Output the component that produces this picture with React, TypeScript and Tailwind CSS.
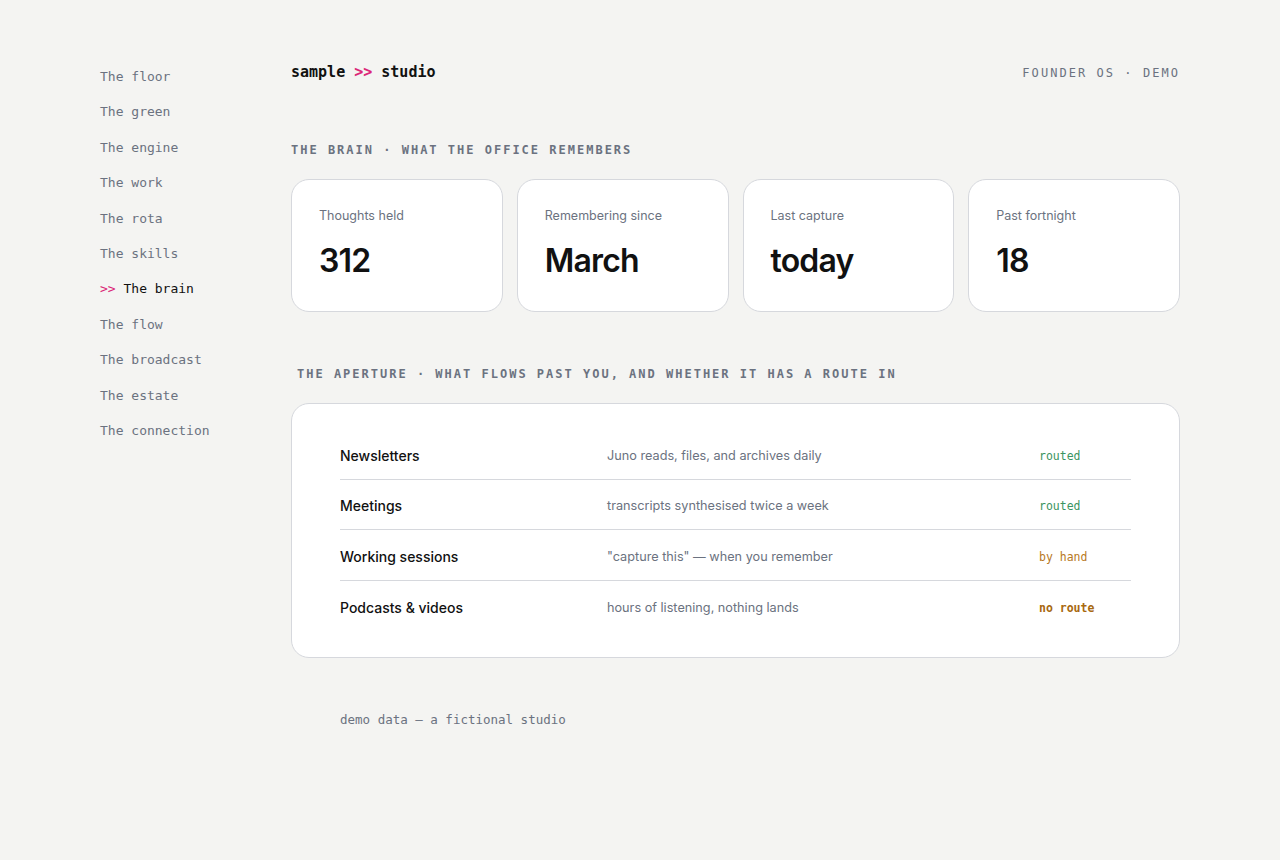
import React from "react";

const mono = "font-['DejaVu_Sans_Mono','Liberation_Mono',monospace]";
const sans = "font-['Inter','Noto_Sans',sans-serif]";

const nav = [
  "The floor",
  "The green",
  "The engine",
  "The work",
  "The rota",
  "The skills",
  "The brain",
  "The flow",
  "The broadcast",
  "The estate",
  "The connection",
];

const stats = [
  { label: "Thoughts held", value: "312" },
  { label: "Remembering since", value: "March" },
  { label: "Last capture", value: "today" },
  { label: "Past fortnight", value: "18" },
];

const rows = [
  { name: "Newsletters", desc: "Juno reads, files, and archives daily", status: "routed", cls: "text-[#3b9461]" },
  { name: "Meetings", desc: "transcripts synthesised twice a week", status: "routed", cls: "text-[#3b9461]" },
  { name: "Working sessions", desc: "\"capture this\" — when you remember", status: "by hand", cls: "text-[#b7791f]" },
  { name: "Podcasts & videos", desc: "hours of listening, nothing lands", status: "no route", cls: "text-[#a8690f] font-bold" },
];

export default function App() {
  return (
    <div className={`min-h-[860px] w-full bg-[#f4f4f2] ${sans}`}>
      <div className="flex px-[100px] pt-[62px]">
        <nav className={`w-[191px] shrink-0 ${mono} text-[13px] leading-[19.5px] flex flex-col gap-[15.9px] pt-[5px]`}>
          {nav.map((n) =>
            n === "The brain" ? (
              <div key={n} className="text-[#111111]">
                <span className="text-[#db2777]">&gt;&gt;</span> {n}
              </div>
            ) : (
              <div key={n} className="text-[#6b7280]">
                {n}
              </div>
            )
          )}
        </nav>
        <main className="flex-1 min-w-0">
          <header className="flex items-center justify-between h-[20px]">
            <div className={`${mono} text-[15px] font-bold text-[#111111]`}>
              sample <span className="text-[#db2777]">&gt;&gt;</span> studio
            </div>
            <div className={`${mono} text-[12px] tracking-[2.05px] pt-[2px] text-[#6b7280]`}>FOUNDER OS · DEMO</div>
          </header>

          <h2 className={`${mono} mt-[59px] text-[12px] leading-[18px] font-bold tracking-[2px] text-[#6b7280]`}>
            THE BRAIN · WHAT THE OFFICE REMEMBERS
          </h2>
          <div className="mt-[20px] grid grid-cols-4 gap-[14px]">
            {stats.map((s) => (
              <div
                key={s.label}
                className="h-[133px] rounded-[18px] border border-[#d6d8dd] bg-white pl-[27px] pt-[26px]"
              >
                <div className="text-[12.5px] leading-[20px] text-[#6b7280]">{s.label}</div>
                <div className="mt-[15px] text-[32px] leading-[40px] font-semibold tracking-[-0.8px] text-[#111111]">
                  {s.value}
                </div>
              </div>
            ))}
          </div>

          <h2 className={`${mono} mt-[53px] pl-[6px] text-[12px] leading-[18px] font-bold tracking-[2px] text-[#6b7280]`}>
            THE APERTURE · WHAT FLOWS PAST YOU, AND WHETHER IT HAS A ROUTE IN
          </h2>
          <div className="mt-[20px] rounded-[18px] border border-[#d6d8dd] bg-white px-[48px] pt-[25px] pb-[26px]">
            {rows.map((r, i) => (
              <div
                key={r.name}
                className={`grid grid-cols-[267px_1fr_92px] items-center h-[50.5px] pt-[3px] ${i < rows.length - 1 ? "border-b border-[#d6d8dd]" : ""}`}
              >
                <div className="text-[14px] font-medium text-[#111111]">{r.name}</div>
                <div className="text-[12.7px] text-[#6b7280]">{r.desc}</div>
                <div className={`${mono} text-[11.5px] pt-[2px] ${r.cls}`}>{r.status}</div>
              </div>
            ))}
          </div>

          <div className={`${mono} mt-[52px] pl-[49px] text-[12.5px] leading-[20px] text-[#6b7280]`}>
            demo data — a fictional studio
          </div>
        </main>
      </div>
    </div>
  );
}
